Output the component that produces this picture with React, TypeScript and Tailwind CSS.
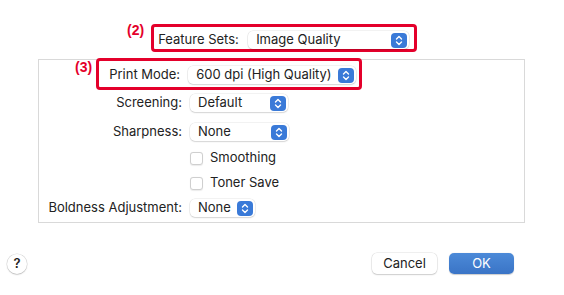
import type { ReactNode } from "react";

function Stepper() {
  return (
    <span className="flex h-[15px] w-[16px] items-center justify-center rounded-[4px] bg-[#3a7ad8]">
      <svg width="8" height="11" viewBox="0 0 8 11" fill="none" stroke="white" strokeWidth="1.4" strokeLinecap="round" strokeLinejoin="round">
        <path d="M1.5 4 L4 1.5 L6.5 4" />
        <path d="M1.5 7 L4 9.5 L6.5 7" />
      </svg>
    </span>
  );
}

function Popup({ value, width }: { value: string; width: string }) {
  return (
    <div
      className={`flex h-[18px] items-center justify-between rounded-[5px] bg-white pl-2 pr-[2px] shadow-[0_0_0_0.5px_rgba(0,0,0,0.1),0_1px_1.5px_rgba(0,0,0,0.12)] ${width}`}
    >
      <span>{value}</span>
      <Stepper />
    </div>
  );
}

function Checkbox() {
  return (
    <span className="h-[13px] w-[13px] rounded-[3px] border border-[#cfcfcf] bg-white shadow-[0_0.5px_1px_rgba(0,0,0,0.08)]" />
  );
}

function Row({ label, children, className }: { label?: string; children: ReactNode; className: string }) {
  return (
    <div className={`flex items-center gap-2 ${className}`}>
      <span className="w-[143px] text-right">{label}</span>
      {children}
    </div>
  );
}

export default function App() {
  return (
    <div className="h-[295px] w-[564px] bg-white font-[Inter,sans-serif] text-[13px] text-[#222]">
      {/* feature sets */}
      <div className="flex items-start pl-[127px] pt-[24px]">
        <span className="-mt-[2px] font-['Liberation_Sans',sans-serif] text-[14px] leading-[16px] font-bold text-[#e4002b]">
          (2)
        </span>
        <div className="ml-[7px] flex h-[28px] w-[266px] items-center rounded-[4px] border-[3px] border-[#e4002b] pt-[4px] pl-[4px]">
          <span className="w-[90px]">Feature Sets:</span>
          <Popup value="Image Quality" width="w-[161px]" />
        </div>
      </div>

      {/* options panel */}
      <div className="mt-[7px] ml-[38px] h-[164px] w-[487px] border border-[#d9d9d9]">
        <div className="-mt-[2px] flex items-start pl-[36px]">
          <span className="mt-[1px] font-['Liberation_Sans',sans-serif] text-[14px] leading-[16px] font-bold text-[#e4002b]">
            (3)
          </span>
          <div className="ml-[4px] flex h-[32px] w-[266px] items-center gap-2 rounded-[4px] border-[3px] border-[#e4002b] pt-[2px] pr-[3px]">
            <span className="w-[81px] text-right">Print Mode:</span>
            <Popup value="600 dpi (High Quality)" width="w-[168px]" />
          </div>
        </div>
        <Row label="Screening:" className="mt-[2px] h-[22px]">
          <Popup value="Default" width="w-[98px]" />
        </Row>
        <Row label="Sharpness:" className="mt-[7px] h-[22px]">
          <Popup value="None" width="w-[99px]" />
        </Row>
        <Row className="mt-[5px] h-[20px]">
          <div className="flex items-center gap-[7px]">
            <Checkbox />
            <span>Smoothing</span>
          </div>
        </Row>
        <Row className="mt-[5px] h-[20px]">
          <div className="flex items-center gap-[7px]">
            <Checkbox />
            <span>Toner Save</span>
          </div>
        </Row>
        <Row label="Boldness Adjustment:" className="mt-[4px] h-[22px]">
          <Popup value="None" width="w-[65px]" />
        </Row>
      </div>

      {/* buttons */}
      <div className="mt-[30px] flex items-center justify-between pr-[50px] pl-[7px]">
        <span className="flex h-[20px] w-[20px] items-center justify-center rounded-full bg-white text-[13px] font-semibold shadow-[0_0_0_0.5px_rgba(0,0,0,0.15),0_1px_1.5px_rgba(0,0,0,0.15)]">
          ?
        </span>
        <div className="flex gap-[12px]">
          <button className="h-[21px] w-[65px] rounded-[5px] bg-white shadow-[0_0_0_0.5px_rgba(0,0,0,0.12),0_1px_1.5px_rgba(0,0,0,0.15)]">
            Cancel
          </button>
          <button className="h-[21px] w-[65px] rounded-[5px] bg-gradient-to-b from-[#4c8ad8] to-[#3a74c6] text-white shadow-[0_0.5px_1px_rgba(0,0,0,0.2)]">
            OK
          </button>
        </div>
      </div>
    </div>
  );
}
